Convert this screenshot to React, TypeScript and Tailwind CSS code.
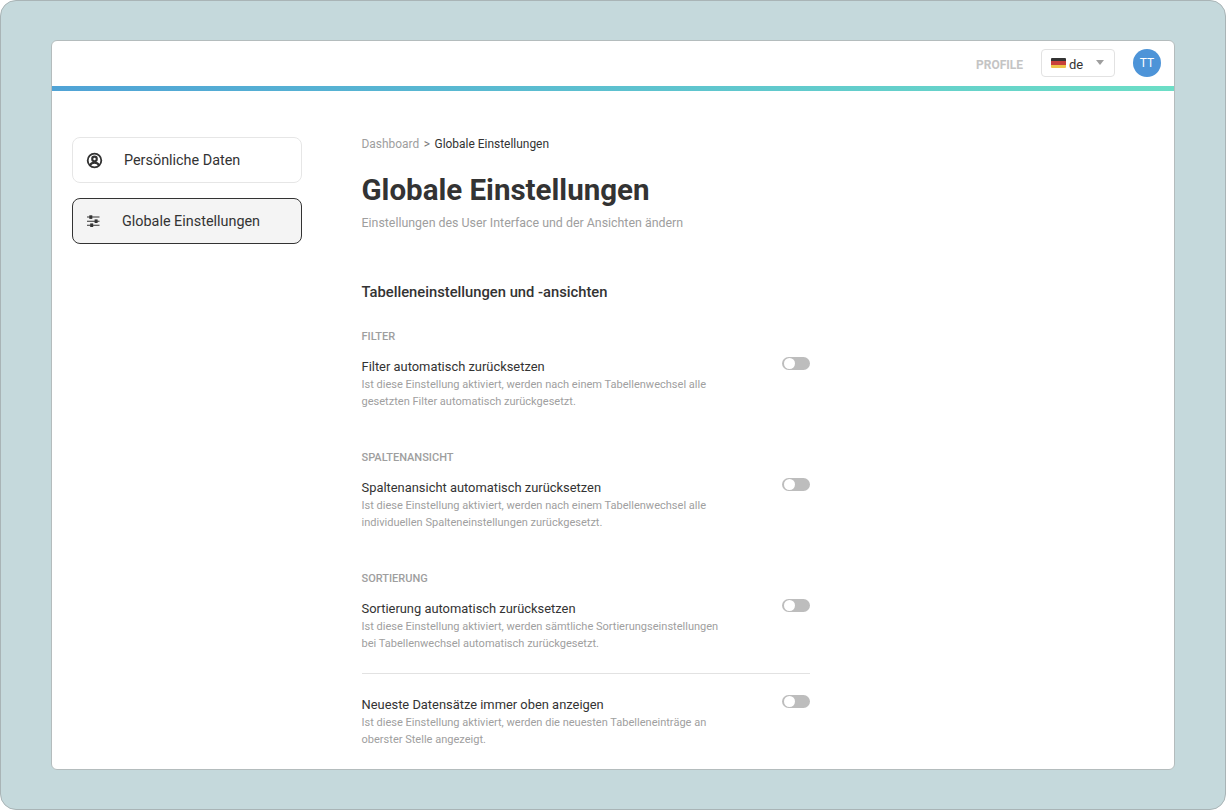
import React from "react";

const settings = [
  {
    heading: "FILTER",
    title: "Filter automatisch zurücksetzen",
    lines: [
      "Ist diese Einstellung aktiviert, werden nach einem Tabellenwechsel alle",
      "gesetzten Filter automatisch zurückgesetzt.",
    ],
  },
  {
    heading: "SPALTENANSICHT",
    title: "Spaltenansicht automatisch zurücksetzen",
    lines: [
      "Ist diese Einstellung aktiviert, werden nach einem Tabellenwechsel alle",
      "individuellen Spalteneinstellungen zurückgesetzt.",
    ],
  },
  {
    heading: "SORTIERUNG",
    title: "Sortierung automatisch zurücksetzen",
    lines: [
      "Ist diese Einstellung aktiviert, werden sämtliche Sortierungseinstellungen",
      "bei Tabellenwechsel automatisch zurückgesetzt.",
    ],
  },
];

const Toggle = () => (
  <div className="mt-[-1px] flex h-[13px] w-[28px] shrink-0 items-center rounded-full bg-[#bdbdbd] pl-[1.5px]">
    <div className="h-[11px] w-[11px] rounded-full bg-white" />
  </div>
);

const SettingRow = ({ title, lines }: { title: string; lines: string[] }) => (
  <div className="flex w-[448.5px] items-start justify-between">
    <div>
      <div className="text-[12.9px] leading-[17px] text-[#333333]">{title}</div>
      <div className="mt-[1px] text-[11.04px] leading-[17px] text-[#a0a0a0]">
        {lines.map((line) => (
          <div key={line}>{line}</div>
        ))}
      </div>
    </div>
    <Toggle />
  </div>
);

const App = () => {
  return (
    <div className="h-[810px] w-[1226px] overflow-hidden rounded-[16px] border border-[#a9b4b6] bg-[#c5d9dc] px-[50px] py-[39px] font-['Roboto',sans-serif]">
      <div className="flex h-[730px] flex-col overflow-hidden rounded-[6px] border border-[#b4bcbd] bg-white">
        <header className="flex h-[45px] shrink-0 items-center justify-end pb-[1px] pr-[13px]">
          <span className="mt-[4px] text-[12px] font-bold text-[#c4c4c4]">PROFILE</span>
          <div className="ml-[18px] flex h-[28px] w-[74px] items-center rounded-[4px] border border-[#e2e2e2] pl-[9px]">
            <div className="flex h-[10px] w-[15px] flex-col overflow-hidden rounded-[1px]">
              <div className="flex-1 bg-[#333333]" />
              <div className="flex-1 bg-[#c9403a]" />
              <div className="flex-1 bg-[#eec44a]" />
            </div>
            <span className="ml-[3px] mt-[3px] text-[13px] text-[#333333]">de</span>
            <div className="mb-[2px] ml-[13px] h-0 w-0 border-x-[4.5px] border-t-[5px] border-x-transparent border-t-[#9e9e9e]" />
          </div>
          <div className="ml-[18px] flex h-[28px] w-[28px] items-center justify-center rounded-full bg-[#4d94d8] text-[12px] text-white">
            TT
          </div>
        </header>
        <div className="h-[5px] shrink-0 bg-gradient-to-r from-[#50a3d6] to-[#6cdec6]" />
        <div className="flex min-h-0 flex-1 overflow-hidden pl-[20px] pt-[46px]">
          <nav className="w-[230px] shrink-0">
            <div className="flex h-[46px] items-center rounded-[8px] border border-[#e6e6e6] pl-[13px] text-[14.4px] text-[#333333]">
              <svg width="17" height="17" viewBox="0 0 24 24" fill="none" stroke="#333333" strokeWidth="2.6">
                <circle cx="12" cy="12" r="9.6" />
                <circle cx="12" cy="9.8" r="3.2" strokeWidth="3" />
                <path d="M5.6 18.6c1.5-2.5 4-3.6 6.4-3.6s4.9 1.1 6.4 3.6" strokeWidth="3" />
              </svg>
              <span className="ml-[21px] mt-[2px]">Persönliche Daten</span>
            </div>
            <div className="mt-[15px] flex h-[46px] items-center rounded-[8px] border border-[#333333] bg-[#f4f4f4] pl-[14px] text-[14.4px] text-[#333333]">
              <svg width="13" height="12" viewBox="0 0 13 12" fill="#333333">
                <path d="M0 2h12.5M0 6.2h12.5M0 10.2h12.5" stroke="#333333" strokeWidth="1.1" />
                <rect x="2.3" y="0.3" width="3" height="3.6" />
                <rect x="7.6" y="4.4" width="3" height="3.6" />
                <rect x="3.2" y="8.4" width="3" height="3.6" />
              </svg>
              <span className="ml-[22px] mt-[2px]">Globale Einstellungen</span>
            </div>
          </nav>
          <main className="ml-[59.5px] min-w-0 flex-1">
            <div className="flex h-[16px] items-center text-[11.95px] text-[#9e9e9e]">
              Dashboard
              <span className="mx-[4.5px] text-[#777777]">&gt;</span>
              <span className="text-[#333333]">Globale Einstellungen</span>
            </div>
            <h1 className="mt-[19px] text-[29.5px] font-bold leading-[36px] text-[#333333]">
              Globale Einstellungen
            </h1>
            <p className="mt-[7px] text-[12.4px] leading-[16px] text-[#9e9e9e]">
              Einstellungen des User Interface und der Ansichten ändern
            </p>
            <h2 className="mt-[51px] text-[14.75px] font-medium leading-[20px] text-[#333333]">
              Tabelleneinstellungen und -ansichten
            </h2>
            <div className="mt-[28px] flex flex-col gap-[41px]">
              {settings.map((s) => (
                <section key={s.heading}>
                  <h3 className="mb-[14px] text-[11px] font-medium leading-[14px] text-[#9e9e9e]">
                    {s.heading}
                  </h3>
                  <SettingRow title={s.title} lines={s.lines} />
                </section>
              ))}
            </div>
            <div className="mb-[22px] mt-[21px] h-px w-[448.5px] bg-[#e2e2e2]" />
            <SettingRow
              title="Neueste Datensätze immer oben anzeigen"
              lines={[
                "Ist diese Einstellung aktiviert, werden die neuesten Tabelleneinträge an",
                "oberster Stelle angezeigt.",
              ]}
            />
          </main>
        </div>
      </div>
    </div>
  );
};

export default App;
